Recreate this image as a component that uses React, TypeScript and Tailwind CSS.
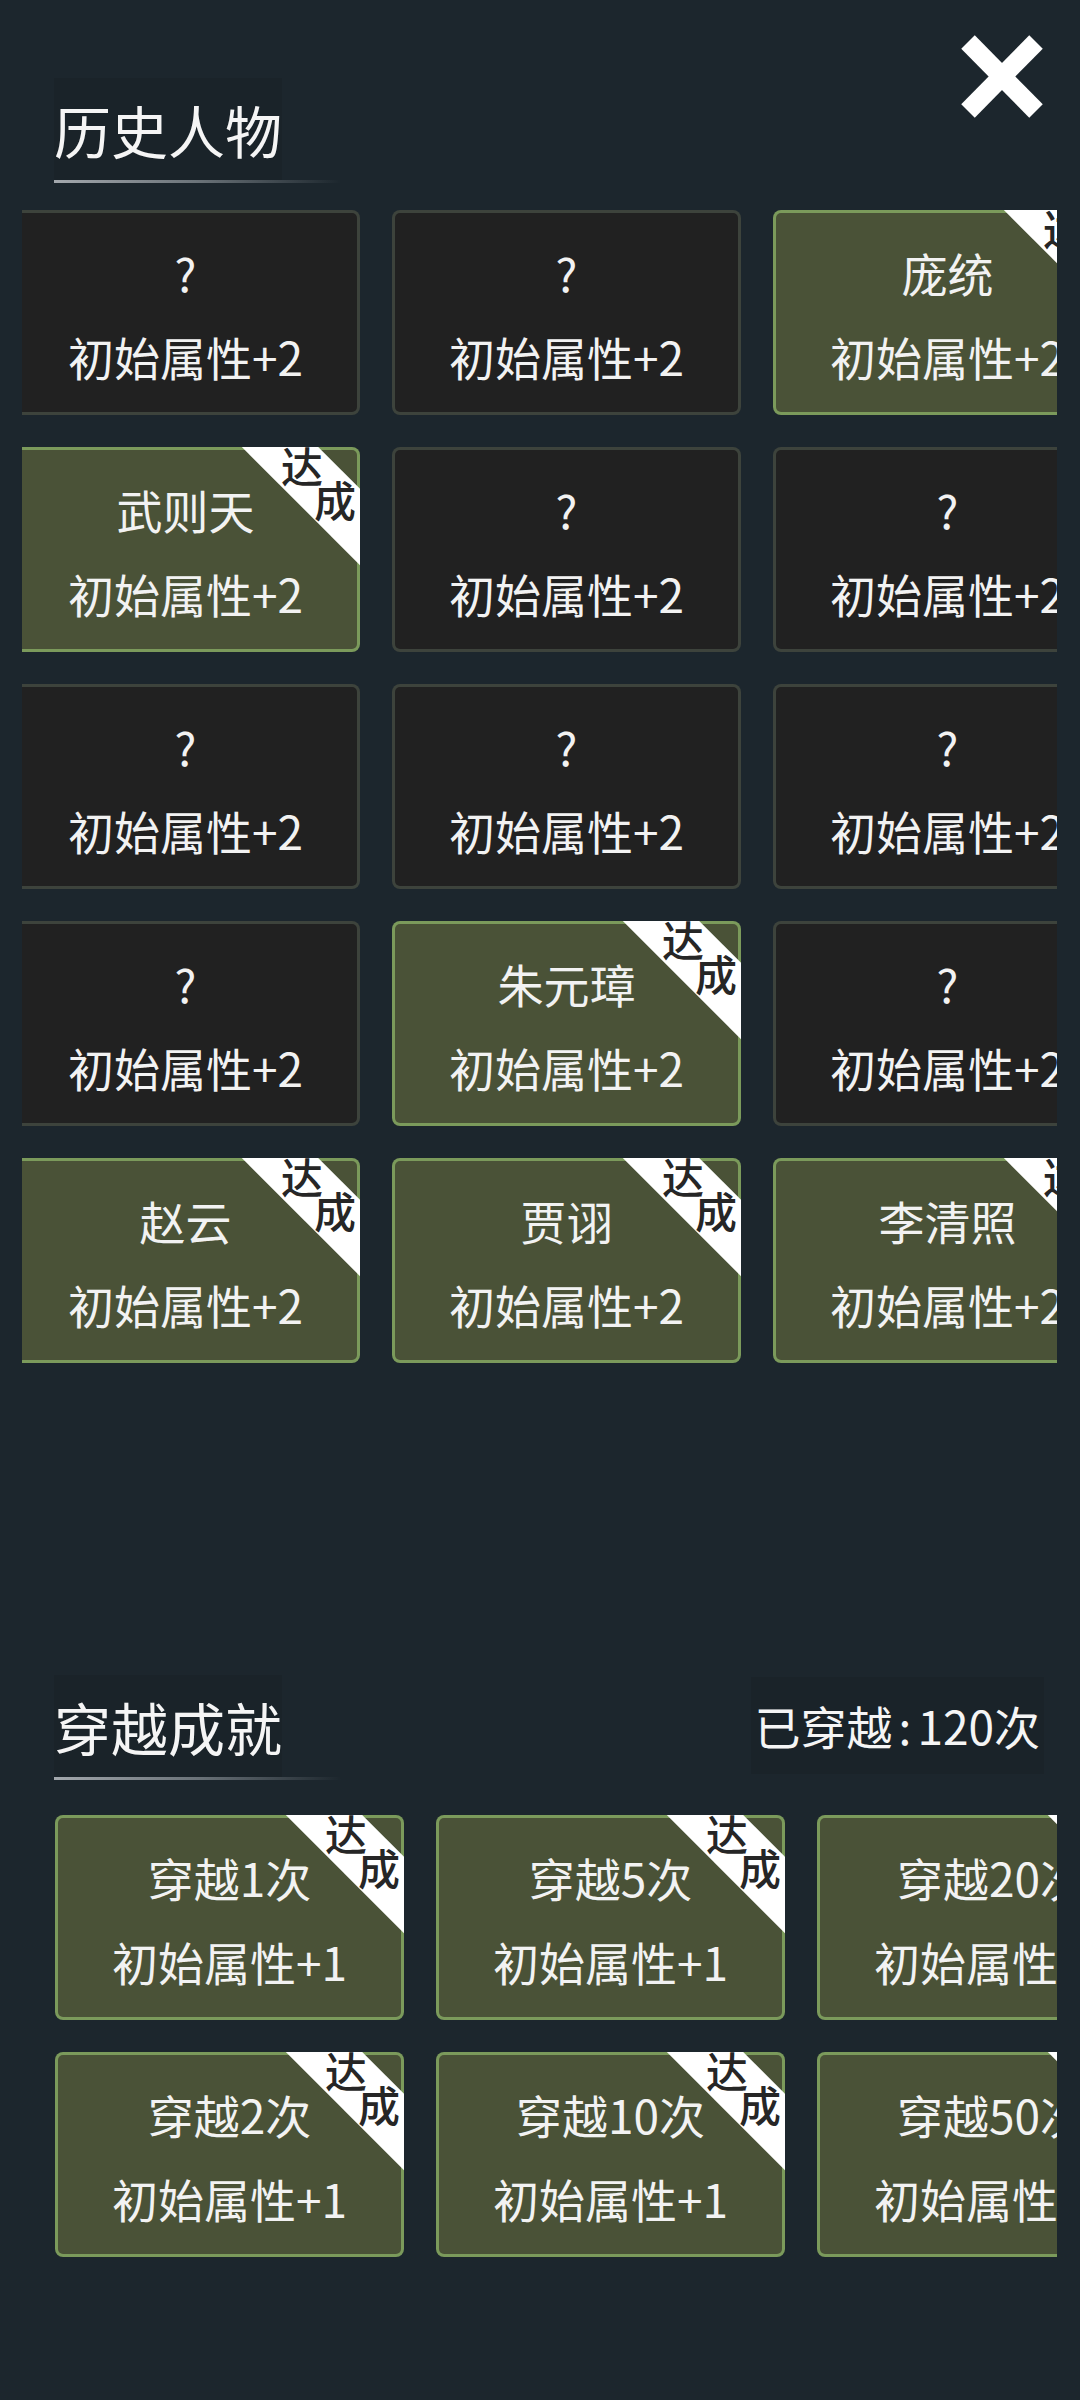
const people = [
  { name: "?", done: false },
  { name: "?", done: false },
  { name: "庞统", done: true },
  { name: "武则天", done: true },
  { name: "?", done: false },
  { name: "?", done: false },
  { name: "?", done: false },
  { name: "?", done: false },
  { name: "?", done: false },
  { name: "?", done: false },
  { name: "朱元璋", done: true },
  { name: "?", done: false },
  { name: "赵云", done: true },
  { name: "贾诩", done: true },
  { name: "李清照", done: true },
];

const trips = [
  { name: "穿越1次", done: true },
  { name: "穿越5次", done: true },
  { name: "穿越20次", done: true },
  { name: "穿越2次", done: true },
  { name: "穿越10次", done: true },
  { name: "穿越50次", done: true },
];

const Card = ({ name, reward, done }: { name: string; reward: string; done: boolean }) => {
  return (
    <div
      className={
        done
          ? "relative h-[205px] overflow-hidden rounded-[8px] bg-[#7b9a5b] p-[3px]"
          : "relative h-[205px] overflow-hidden rounded-[8px] bg-[#3d433c] p-[3px]"
      }
    >
      <div
        className={
          done
            ? "flex h-full flex-col items-center gap-[28px] rounded-[5px] bg-[#4a5237] pt-[31px] text-[46px] leading-[56px] text-[#f2f2f2] whitespace-nowrap"
            : "flex h-full flex-col items-center gap-[28px] rounded-[5px] bg-[#212121] pt-[31px] text-[46px] leading-[56px] text-[#f2f2f2] whitespace-nowrap"
        }
      >
        <p>{name}</p>
        <p>{reward}</p>
      </div>
      {done && (
        <>
          <div className="absolute right-[-75px] top-[13px] h-[54px] w-[230px] rotate-45 bg-white" />
          <span className="absolute right-[37px] top-[-3px] text-[42px] leading-[42px] font-medium text-[#262626]">达</span>
          <span className="absolute right-[4px] top-[31px] text-[42px] leading-[42px] font-medium text-[#262626]">成</span>
        </>
      )}
    </div>
  );
};

const Heading = ({ title }: { title: string }) => (
  <div className="flex flex-col items-start">
    <div className="h-[102px] bg-[#1a2329] text-[57px] leading-[102px] text-[#f5f5f5]">{title}</div>
    <div className="h-[3px] w-[287px] bg-gradient-to-r from-[#a3a8ad] via-[#6b7379] to-transparent" />
  </div>
);

export default function App() {
  return (
    <div className="relative min-h-[2400px] w-full bg-[#1c262d] font-['Noto_Sans_CJK_SC','Noto_Sans',sans-serif]">
      <button className="absolute right-[37px] top-[35px]">
        <svg width="82" height="83" viewBox="0 0 82 83">
          <line x1="7" y1="7" x2="75" y2="76" stroke="white" strokeWidth="19" />
          <line x1="75" y1="7" x2="7" y2="76" stroke="white" strokeWidth="19" />
        </svg>
      </button>

      <div className="pl-[54px] pt-[78px]">
        <Heading title="历史人物" />
      </div>
      <div className="ml-[22px] mt-[27px] w-[1035px] overflow-hidden">
        <div className="-ml-[11px] grid grid-cols-[repeat(3,349px)] gap-[32px]">
          {people.map((p, i) => (
            <Card key={i} name={p.name} reward="初始属性+2" done={p.done} />
          ))}
        </div>
      </div>

      <div className="mt-[312px] flex items-start justify-between pl-[54px] pr-[36px]">
        <Heading title="穿越成就" />
        <div className="mt-[2px] h-[97px] bg-[#1a2329] px-[4px] text-[46px] leading-[97px] text-[#f5f5f5]">
          已穿越<span className="mx-[6px]">:</span>120次
        </div>
      </div>
      <div className="ml-[22px] mt-[35px] w-[1035px] overflow-hidden pb-[141px]">
        <div className="ml-[33px] grid grid-cols-[repeat(3,349px)] gap-[32px]">
          {trips.map((t, i) => (
            <Card key={i} name={t.name} reward="初始属性+1" done={t.done} />
          ))}
        </div>
      </div>
    </div>
  );
}
